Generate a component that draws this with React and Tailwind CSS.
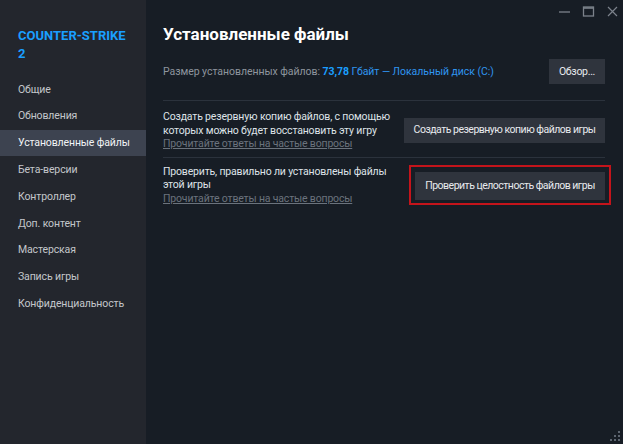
import React from "react";

const menu = [
  "Общие",
  "Обновления",
  "Установленные файлы",
  "Бета-версии",
  "Контроллер",
  "Доп. контент",
  "Мастерская",
  "Запись игры",
  "Конфиденциальность",
];

function WindowControls() {
  return (
    <div className="absolute top-[5px] right-[4px] flex items-center gap-[11px] text-[#7c828b]">
      <svg width="13" height="13" viewBox="0 0 13 13">
        <path d="M1 7h11" stroke="currentColor" strokeWidth="1.3" />
      </svg>
      <svg width="13" height="13" viewBox="0 0 13 13">
        <rect x="1.5" y="2" width="10" height="9" fill="none" stroke="currentColor" strokeWidth="1.3" />
        <path d="M1.5 3h10" stroke="currentColor" strokeWidth="1.6" />
      </svg>
      <svg width="13" height="13" viewBox="0 0 13 13">
        <path d="M2 2l9 9M11 2l-9 9" stroke="currentColor" strokeWidth="1.2" />
      </svg>
    </div>
  );
}

function ResizeGrip() {
  const dots = [
    [8, 0],
    [4, 4],
    [8, 4],
    [0, 8],
    [4, 8],
    [8, 8],
  ];
  return (
    <svg className="absolute bottom-[2px] right-[2px]" width="11" height="11" viewBox="0 0 11 11">
      {dots.map(([x, y], i) => (
        <rect key={i} x={x} y={y} width="2" height="2" fill="#5d6570" />
      ))}
    </svg>
  );
}

function Row({ lines, button, highlight }) {
  return (
    <div
      className={
        "flex items-center justify-between border-t border-[#2b323c] " +
        (highlight ? "pt-[7px] pb-[6px]" : "pt-[9px] pb-[6px]")
      }
    >
      <div className="text-[10.5px] leading-[13.5px] tracking-[-0.17px] text-[#dfe3e8] whitespace-nowrap">
        {lines.map((l, i) => (
          <div key={i}>{l}</div>
        ))}
        <div className="text-[#6b737d] underline">Прочитайте ответы на частые вопросы</div>
      </div>
      {highlight ? (
        <div className="border-[2px] border-[#c4141b] pt-[5px] pb-[3px] px-[4px] mr-[-6px]">
          <button className="bg-[#2f343d] text-[#e8eaed] text-[10.5px] tracking-[-0.5px] whitespace-nowrap h-[28px] w-[190px]">
            {button}
          </button>
        </div>
      ) : (
        <button className="bg-[#2f343d] text-[#e8eaed] text-[10.5px] tracking-[-0.5px] whitespace-nowrap h-[25px] w-[201px]">
          {button}
        </button>
      )}
    </div>
  );
}

export default function App() {
  return (
    <div
      className="relative flex w-[623px] h-[444px] bg-[#171d25] overflow-hidden"
      style={{ fontFamily: 'Roboto, "Liberation Sans", Arial, sans-serif' }}
    >
      {/* sidebar */}
      <div className="w-[146px] shrink-0 bg-[#23262d] pt-[27px]">
        <div className="px-[18px] text-[#1a9fff] font-bold text-[13px] leading-[18px] whitespace-nowrap">
          COUNTER-STRIKE
          <br />2
        </div>
        <div className="mt-[13px]">
          {menu.map((m) => (
            <div
              key={m}
              className={
                "h-[26.8px] flex items-center px-[18px] text-[10.5px] tracking-[-0.13px] whitespace-nowrap " +
                (m === "Установленные файлы"
                  ? "bg-[#3d4350] text-[#f2f4f6]"
                  : "text-[#c3c6cb]")
              }
            >
              {m}
            </div>
          ))}
        </div>
      </div>

      {/* main panel */}
      <div className="flex-1 pl-[17px] pr-[18px] pt-[23px]">
        <h1 className="text-white font-bold text-[17px] leading-[22px]">Установленные файлы</h1>
        <div className="flex items-center justify-between mt-[14px] pb-[16px]">
          <div className="text-[10.5px] tracking-[-0.05px] text-[#8e959e] whitespace-nowrap">
            Размер установленных файлов:{" "}
            <span className="text-[#1a9fff] font-bold">73,78</span>{" "}
            <span className="text-[#2f95f0]">Гбайт — Локальный диск (C:)</span>
          </div>
          <button className="bg-[#2f343d] text-[#e8eaed] text-[10.5px] tracking-[-0.3px] h-[25px] w-[56px]">
            Обзор...
          </button>
        </div>
        <Row
          lines={["Создать резервную копию файлов, с помощью", "которых можно будет восстановить эту игру"]}
          button="Создать резервную копию файлов игры"
        />
        <Row
          lines={["Проверить, правильно ли установлены файлы", "этой игры"]}
          button="Проверить целостность файлов игры"
          highlight
        />
      </div>

      <WindowControls />
      <ResizeGrip />
    </div>
  );
}
